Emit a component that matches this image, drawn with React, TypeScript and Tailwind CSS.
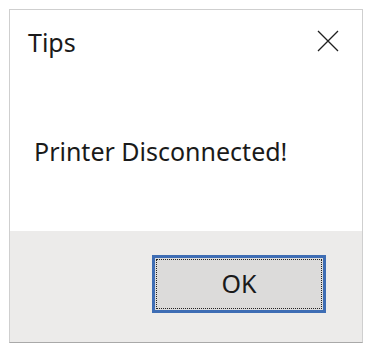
export default function App() {
  return (
    <div className="w-[373px] h-[352px] bg-white p-[9px] font-['Noto_Sans',sans-serif]">
      <div className="flex h-[334px] w-[354px] flex-col border border-[#cfcfcf] border-b-[#a9a9a9] bg-white">
        <div className="flex h-[221px] flex-col">
          <div className="flex items-start justify-between pl-[18px] pr-[23px] pt-[17px]">
            <span className="text-[25px] leading-[30px] text-[#1a1a1a]">Tips</span>
            <svg width="22" height="22" viewBox="0 0 22 22" className="mt-[3px]">
              <path d="M1 1 L21 21 M21 1 L1 21" stroke="#1f1f1f" strokeWidth="1.3" fill="none" />
            </svg>
          </div>
          <p className="mt-[79px] pl-[24px] text-[25px] leading-[30px] text-[#1a1a1a]">Printer Disconnected!</p>
        </div>
        <div className="flex flex-1 items-start justify-end bg-[#ecebea] pr-[36px] pt-[24px]">
          <button className="flex h-[58px] w-[174px] items-center justify-center border-[3px] border-[#3e6db4] bg-[#dcdbda] p-[1px]">
            <span className="flex h-full w-full items-center justify-center border border-dotted border-[#222] text-[25px] text-[#1a1a1a]">OK</span>
          </button>
        </div>
      </div>
    </div>
  )
}
